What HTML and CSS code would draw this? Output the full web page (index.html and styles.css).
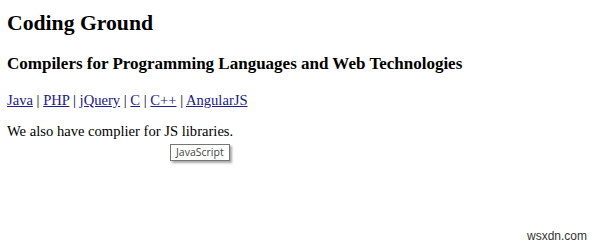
FILE: index.html
```html
<!DOCTYPE html>
<html lang="en">
<head>
    <meta charset="UTF-8">
    <title>Coding Ground</title>
    <link rel="stylesheet" href="styles.css">
</head>
<body>
    <h2>Coding Ground</h2>
    <h3>Compilers for Programming Languages and Web Technologies</h3>
    <p class="links">
        <a href="#">Java</a> | <a href="#">PHP</a> | <a href="#">jQuery</a> | <a href="#">C</a> | <a href="#">C++</a> | <a href="#">AngularJS</a>
    </p>
    <p class="note">We also have complier for <abbr>JS</abbr> libraries.<span class="tooltip">JavaScript</span></p>
    <div class="watermark">wsxdn.com</div>
</body>
</html>
```

FILE: styles.css
```css
body {
    font-family: "Liberation Serif", "Times New Roman", serif;
    font-size: 14.6px;
    margin: 0 7px;
    color: #000;
    position: relative;
    height: 247px;
}
h2 {
    font-size: 21.7px;
    margin: 11px 0 0;
}
h3 {
    font-size: 17px;
    margin: 18px 0 0;
}
.links {
    margin: 18px 0 0;
}
a {
    color: #20208a;
}
.note {
    margin: 14px 0 0;
    position: relative;
}
abbr {
    text-decoration: none;
}
.tooltip {
    position: absolute;
    left: 163px;
    top: 21px;
    font-family: "Open Sans", "DejaVu Sans", sans-serif;
    font-size: 10.5px;
    line-height: 12px;
    color: #444;
    background: #fff;
    border: 1px solid #767676;
    padding: 1px 5px 2px;
    box-shadow: 2px 2px 2px #aaa;
}
.watermark {
    position: absolute;
    right: 6px;
    bottom: 4px;
    font-family: "Liberation Sans", Arial, sans-serif;
    font-size: 12px;
    color: #333;
}
```
